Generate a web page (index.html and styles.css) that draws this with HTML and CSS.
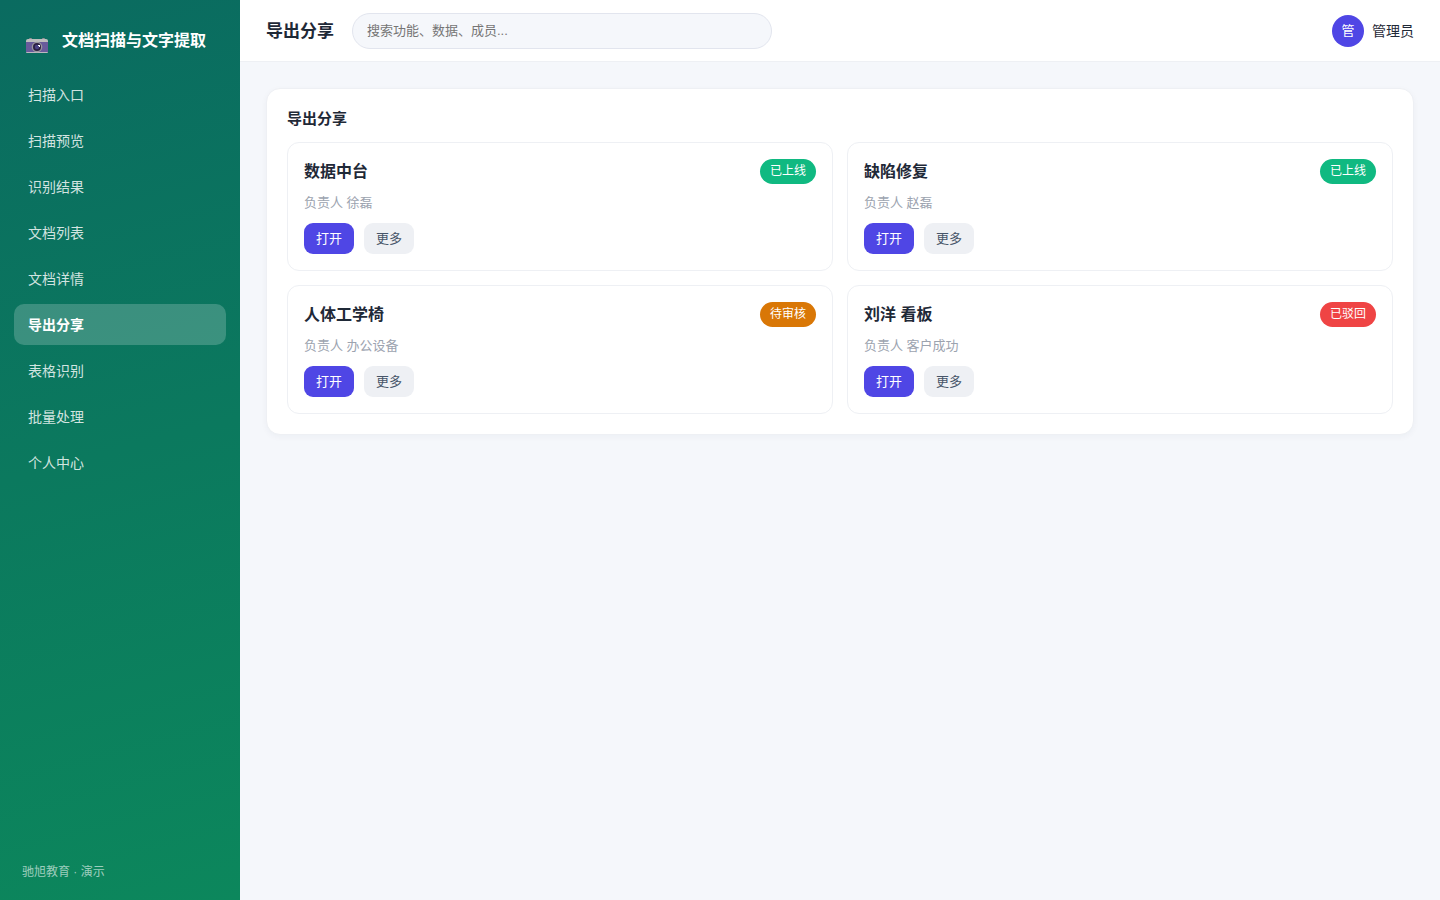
FILE: index.html
```html
<!DOCTYPE html>
<html lang="zh-CN">
<head>
<meta charset="utf-8">
<title>导出分享</title>
<link rel="stylesheet" href="styles.css">
</head>
<body>
<div class="app">
  <aside class="sidebar">
    <div class="brand">
      <svg class="brand-icon" viewBox="0 0 22 16" aria-hidden="true">
        <path d="M3 1q0-1 1-1h1q1 0 1 1v1H3zM16 1q0-1 1-1h1q1 0 1 1v1h-3z" fill="#988f96"/>
        <path d="M0 4V3q0-2 2-2h18q2 0 2 2v1z" fill="#bdbdbd"/>
        <path d="M0 4h22v10H0z" fill="#685b9b"/>
        <path d="M0 14h22q0 1-1 1H1q-1 0-1-1z" fill="#bdb8c0"/>
        <circle cx="11" cy="9" r="5.3" fill="#9b989e"/>
        <circle cx="11" cy="9" r="4" fill="#2d2144"/>
        <circle cx="11" cy="9" r="2.2" fill="#4b4385"/>
        <path d="M12 7h2v2h-1V8h-1z" fill="#fff"/>
      </svg>
      <span>文档扫描与文字提取</span>
    </div>
    <nav class="nav">
      <a class="nav-item" href="#">扫描入口</a>
      <a class="nav-item" href="#">扫描预览</a>
      <a class="nav-item" href="#">识别结果</a>
      <a class="nav-item" href="#">文档列表</a>
      <a class="nav-item" href="#">文档详情</a>
      <a class="nav-item active" href="#" aria-current="page">导出分享</a>
      <a class="nav-item" href="#">表格识别</a>
      <a class="nav-item" href="#">批量处理</a>
      <a class="nav-item" href="#">个人中心</a>
    </nav>
    <div class="side-foot">驰旭教育 · 演示</div>
  </aside>
  <div class="main">
    <header class="topbar">
      <h1 class="title">导出分享</h1>
      <input class="search" type="search" aria-label="搜索" placeholder="搜索功能、数据、成员...">
      <div class="user"><span class="avatar">管</span><span class="user-name">管理员</span></div>
    </header>
    <main class="content">
      <section class="panel">
        <h2 class="panel-title">导出分享</h2>
        <div class="grid">
          <article class="card">
            <div class="card-head"><h3 class="card-title">数据中台</h3><span class="badge green">已上线</span></div>
            <p class="owner">负责人 徐磊</p>
            <div class="actions"><button class="btn primary" type="button">打开</button><button class="btn" type="button">更多</button></div>
          </article>
          <article class="card">
            <div class="card-head"><h3 class="card-title">缺陷修复</h3><span class="badge green">已上线</span></div>
            <p class="owner">负责人 赵磊</p>
            <div class="actions"><button class="btn primary" type="button">打开</button><button class="btn" type="button">更多</button></div>
          </article>
          <article class="card">
            <div class="card-head"><h3 class="card-title">人体工学椅</h3><span class="badge amber">待审核</span></div>
            <p class="owner">负责人 办公设备</p>
            <div class="actions"><button class="btn primary" type="button">打开</button><button class="btn" type="button">更多</button></div>
          </article>
          <article class="card">
            <div class="card-head"><h3 class="card-title">刘洋 看板</h3><span class="badge red">已驳回</span></div>
            <p class="owner">负责人 客户成功</p>
            <div class="actions"><button class="btn primary" type="button">打开</button><button class="btn" type="button">更多</button></div>
          </article>
        </div>
      </section>
    </main>
  </div>
</div>
</body>
</html>
```
FILE: styles.css
```css
* { box-sizing: border-box; }
body, h1, h2, h3, p { margin: 0; }
body {
  font-family: "Liberation Sans", "Noto Sans CJK SC", sans-serif;
  font-size: 14px;
  line-height: 21px;
  color: #1f2937;
  background: #f5f7fb;
}
button, input { font: inherit; }
.app { display: flex; min-height: 100vh; }
.sidebar {
  flex: none;
  width: 240px;
  display: flex;
  flex-direction: column;
  padding: 22px 14px 17px;
  color: #fff;
  background: linear-gradient(165deg, #0a6b60, #0c875c);
}
.brand {
  display: flex;
  align-items: center;
  gap: 14px;
  padding: 6px 12px 20px;
  font-size: 16px;
  line-height: 24px;
  font-weight: 700;
  white-space: nowrap;
}
.brand-icon { flex: none; width: 22px; height: 16px; margin-top: 10px; }
.nav { display: flex; flex-direction: column; gap: 5px; }
.nav-item {
  padding: 11px 14px 9px;
  border-radius: 10px;
  color: rgba(255, 255, 255, .82);
  text-decoration: none;
}
.nav-item.active { background: rgba(255, 255, 255, .2); color: #fff; font-weight: 700; }
.side-foot {
  margin-top: auto;
  padding: 0 8px;
  font-size: 12px;
  color: rgba(255, 255, 255, .6);
}
.main { flex: 1; min-width: 0; }
.topbar {
  display: flex;
  align-items: center;
  gap: 18px;
  height: 62px;
  padding: 0 26px;
  background: #fff;
  border-bottom: 1px solid #eef0f4;
}
.title { padding-top: 2px; font-size: 17px; line-height: 26px; font-weight: 700; white-space: nowrap; }
.search {
  flex: 0 1 420px;
  min-width: 0;
  height: 36px;
  padding: 0 14px;
  border: 1px solid #e2e5ee;
  border-radius: 18px;
  background: #f5f7fb;
  font-size: 13px;
  appearance: none;
}
.search::placeholder { color: #757575; }
.user { display: flex; align-items: center; gap: 8px; margin-left: auto; white-space: nowrap; }
.user-name { padding-top: 2px; }
.avatar {
  width: 32px;
  height: 32px;
  border-radius: 50%;
  background: #4f46e5;
  color: #fff;
  font-size: 13px;
  line-height: 32px;
  text-align: center;
}
.content { padding: 26px; }
.panel {
  padding: 20px;
  border: 1px solid #eef0f4;
  border-radius: 14px;
  background: #fff;
  box-shadow: 0 2px 6px rgba(30, 40, 80, .04);
}
.panel-title { margin-bottom: 13px; font-size: 15px; line-height: 20px; font-weight: 700; }
.grid { display: grid; grid-template-columns: repeat(2, minmax(0, 1fr)); gap: 14px; }
.card { padding: 16px; border: 1px solid #eef0f4; border-radius: 12px; }
.card-head { display: flex; justify-content: space-between; align-items: center; }
.card-title { font-size: 16px; line-height: 25px; font-weight: 700; }
.badge {
  padding: 0 10px;
  border-radius: 13px;
  color: #fff;
  font-size: 12px;
  line-height: 25px;
}
.green { background: #10b981; }
.amber { background: #d97706; }
.red { background: #ef4444; }
.owner { margin: 8px 0 10px; font-size: 13px; color: #9ca3af; }
.actions { display: flex; gap: 10px; }
.btn {
  height: 31px;
  padding: 0 12px;
  border: 0;
  border-radius: 9px;
  background: #eef0f4;
  color: #475569;
  font-size: 13px;
  line-height: 31px;
  cursor: pointer;
}
.btn.primary { background: #4f46e5; color: #fff; }
```
